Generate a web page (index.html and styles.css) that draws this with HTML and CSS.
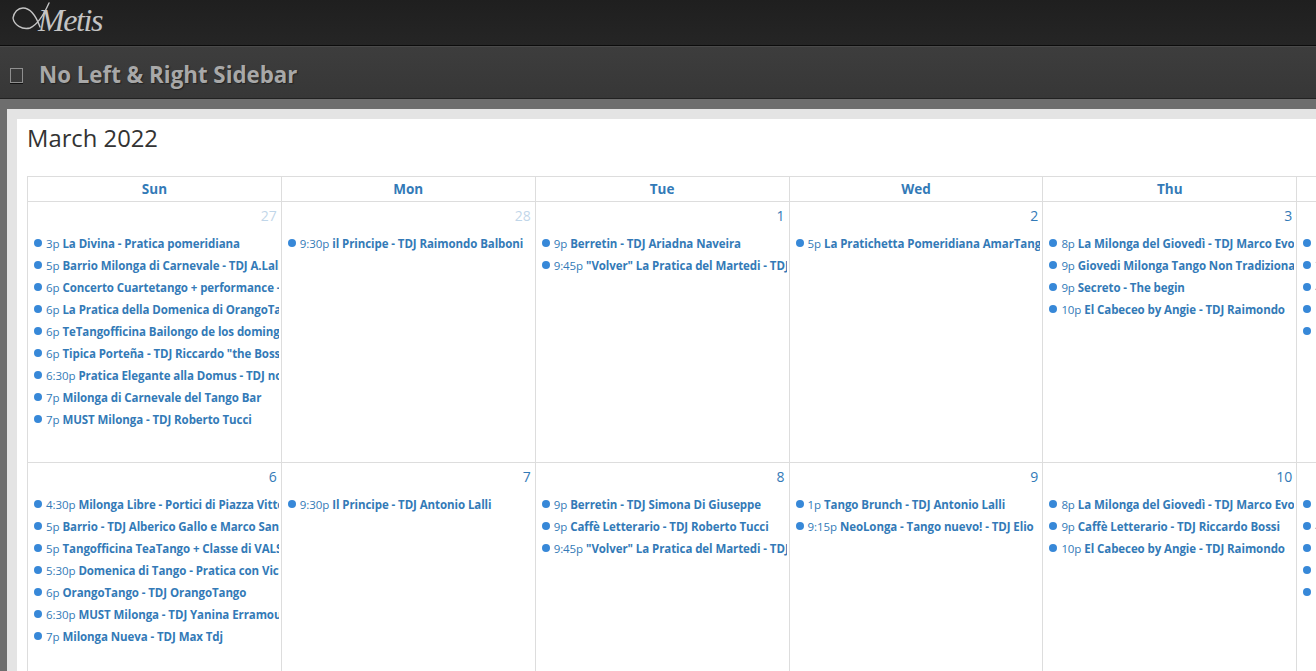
FILE: index.html
```html
<!DOCTYPE html>
<html lang="en">
<head>
<meta charset="utf-8">
<title>No Left &amp; Right Sidebar</title>
<link rel="stylesheet" href="styles.css">
</head>
<body>
<header class="topbar">
<svg class="flourish" width="40" height="34" viewBox="0 0 40 34" aria-hidden="true"><path d="M37 3C33 12 27 24 18 28C10 30 2 25 1 18C2 12 6 8 11 8C18 8 24 16 28 27" fill="none" stroke="#c4c4c4" stroke-width="1.4" stroke-linecap="round"/></svg>
<a class="logo">Metis</a>
</header>
<div class="headbar"><span class="headicon"></span><h1 class="headtitle">No Left &amp; Right Sidebar</h1></div>
<main class="outer">
<div class="inner">
<div class="panel">
<h2 class="month">March 2022</h2>
<div class="cal">
<div class="dow">Sun</div><div class="dow">Mon</div><div class="dow">Tue</div><div class="dow">Wed</div><div class="dow">Thu</div><div class="dow">Fri</div><div class="dow">Sat</div>

<div class="day"><div class="num other">27</div>
<div class="ev"><i></i><span>3p</span> <b>La Divina - Pratica pomeridiana</b></div>
<div class="ev"><i></i><span>5p</span> <b>Barrio Milonga di Carnevale - TDJ A.Lalli</b></div>
<div class="ev"><i></i><span>6p</span> <b>Concerto Cuartetango + performance - TDJ</b></div>
<div class="ev"><i></i><span>6p</span> <b>La Pratica della Domenica di OrangoTango</b></div>
<div class="ev"><i></i><span>6p</span> <b>TeTangofficina Bailongo de los domingos</b></div>
<div class="ev"><i></i><span>6p</span> <b>Tipica Porteña - TDJ Riccardo "the Boss"</b></div>
<div class="ev"><i></i><span>6:30p</span> <b>Pratica Elegante alla Domus - TDJ non</b></div>
<div class="ev"><i></i><span>7p</span> <b>Milonga di Carnevale del Tango Bar</b></div>
<div class="ev"><i></i><span>7p</span> <b>MUST Milonga - TDJ Roberto Tucci</b></div>
</div>
<div class="day"><div class="num other">28</div>
<div class="ev"><i></i><span>9:30p</span> <b>il Principe - TDJ Raimondo Balboni</b></div>
</div>
<div class="day"><div class="num">1</div>
<div class="ev"><i></i><span>9p</span> <b>Berretin - TDJ Ariadna Naveira</b></div>
<div class="ev"><i></i><span>9:45p</span> <b>"Volver" La Pratica del Martedi - TDJ Max</b></div>
</div>
<div class="day"><div class="num">2</div>
<div class="ev"><i></i><span>5p</span> <b>La Pratichetta Pomeridiana AmarTangO</b></div>
</div>
<div class="day"><div class="num">3</div>
<div class="ev"><i></i><span>8p</span> <b>La Milonga del Giovedì - TDJ Marco Evola</b></div>
<div class="ev"><i></i><span>9p</span> <b>Giovedi Milonga Tango Non Tradizionale</b></div>
<div class="ev"><i></i><span>9p</span> <b>Secreto - The begin</b></div>
<div class="ev"><i></i><span>10p</span> <b>El Cabeceo by Angie - TDJ Raimondo</b></div>
</div>
<div class="day"><div class="num">4</div>
<div class="ev"><i></i><span>10p</span> <b>Milonga</b></div>
<div class="ev"><i></i><span>7p</span> <b>Milonga</b></div>
<div class="ev"><i></i><span>4p</span> <b>Milonga</b></div>
<div class="ev"><i></i><span>10p</span> <b>Milonga</b></div>
<div class="ev"><i></i><span>10p</span> <b>Milonga</b></div>
</div>
<div class="day"><div class="num">5</div></div>

<div class="day"><div class="num">6</div>
<div class="ev"><i></i><span>4:30p</span> <b>Milonga Libre - Portici di Piazza Vittorio</b></div>
<div class="ev"><i></i><span>5p</span> <b>Barrio - TDJ Alberico Gallo e Marco Santoro</b></div>
<div class="ev"><i></i><span>5p</span> <b>Tangofficina TeaTango + Classe di VALS</b></div>
<div class="ev"><i></i><span>5:30p</span> <b>Domenica di Tango - Pratica con Victor</b></div>
<div class="ev"><i></i><span>6p</span> <b>OrangoTango - TDJ OrangoTango</b></div>
<div class="ev"><i></i><span>6:30p</span> <b>MUST Milonga - TDJ Yanina Erramouspe</b></div>
<div class="ev"><i></i><span>7p</span> <b>Milonga Nueva - TDJ Max Tdj</b></div>
</div>
<div class="day"><div class="num">7</div>
<div class="ev"><i></i><span>9:30p</span> <b>Il Principe - TDJ Antonio Lalli</b></div>
</div>
<div class="day"><div class="num">8</div>
<div class="ev"><i></i><span>9p</span> <b>Berretin - TDJ Simona Di Giuseppe</b></div>
<div class="ev"><i></i><span>9p</span> <b>Caffè Letterario - TDJ Roberto Tucci</b></div>
<div class="ev"><i></i><span>9:45p</span> <b>"Volver" La Pratica del Martedi - TDJ Max</b></div>
</div>
<div class="day"><div class="num">9</div>
<div class="ev"><i></i><span>1p</span> <b>Tango Brunch - TDJ Antonio Lalli</b></div>
<div class="ev"><i></i><span>9:15p</span> <b>NeoLonga - Tango nuevo! - TDJ Elio</b></div>
</div>
<div class="day"><div class="num">10</div>
<div class="ev"><i></i><span>8p</span> <b>La Milonga del Giovedì - TDJ Marco Evola</b></div>
<div class="ev"><i></i><span>9p</span> <b>Caffè Letterario - TDJ Riccardo Bossi</b></div>
<div class="ev"><i></i><span>10p</span> <b>El Cabeceo by Angie - TDJ Raimondo</b></div>
</div>
<div class="day"><div class="num">11</div>
<div class="ev"><i></i><span>10p</span> <b>Milonga</b></div>
<div class="ev"><i></i><span>4p</span> <b>Milonga</b></div>
<div class="ev"><i></i><span>10p</span> <b>Milonga</b></div>
<div class="ev"><i></i><span>10p</span> <b>Milonga</b></div>
<div class="ev"><i></i><span>10p</span> <b>Milonga</b></div>
</div>
<div class="day"><div class="num">12</div></div>
</div>
</div>
</div>
</main>
</body>
</html>
```
FILE: styles.css
```css
* { box-sizing: border-box; }
html, body { margin: 0; height: 671px; overflow: hidden; }
body { width: 1316px; font-family: "Open Sans", "Noto Sans", sans-serif; background: #6e6e6e; }
.topbar { height: 46px; background: linear-gradient(#1f1f1f, #252525); border-bottom: 1px solid #0c0c0c; padding-left: 12px; display: flex; align-items: flex-start; }
.flourish { flex: none; margin-right: -14px; }
.logo { display: block; font: italic 32px/44px "Liberation Serif", serif; color: #c4c4c4; letter-spacing: -1.4px; margin-top: -2px; }
.headbar { height: 53px; background: linear-gradient(#3d3d3d, #373737); border-top: 1px solid #4a4a4a; border-bottom: 1px solid #222; display: flex; align-items: center; padding: 5px 0 0 10px; }
.headicon { width: 13px; height: 15px; border: 1px solid #8f8f8f; box-shadow: 0 1px 0 #111; margin-right: 16px; }
.headtitle { margin: 0; font-size: 22.3px; line-height: 30px; font-weight: 700; color: #a8a8a8; text-shadow: 1px 1px 1px #222; }
.outer { padding: 10px 0 0 7px; }
.inner { background: #e4e4e4; padding: 10px 0 0 10px; }
.panel { background: #fff; padding: 0 0 0 10px; height: 560px; overflow: hidden; }
.month { margin: 0; height: 57px; font-size: 23.8px; line-height: 38px; font-weight: 400; color: #333; }
.cal { width: 1778px; display: grid; grid-template-columns: repeat(7, 253.85px); grid-template-rows: 25px 261px 261px; border-top: 1px solid #ddd; border-left: 1px solid #ddd; }
.dow { border-right: 1px solid #ddd; border-bottom: 1px solid #ddd; text-align: center; font-size: 13.5px; line-height: 24px; font-weight: 700; color: #337ab7; }
.day { border-right: 1px solid #ddd; border-bottom: 1px solid #ddd; overflow: hidden; min-width: 0; }
.num { height: 30px; padding: 4px 4px 0 0; text-align: right; font-size: 14px; line-height: 20px; color: #337ab7; }
.num.other { opacity: .3; }
.ev { display: flex; align-items: center; height: 22px; padding-left: 6px; margin-right: 2px; font-size: 11.5px; letter-spacing: -.08px; line-height: 21px; color: #337ab7; white-space: pre; overflow: hidden; }
.ev i { flex: none; width: 8px; height: 8px; border-radius: 50%; background: #3788d8; margin-right: 4px; }
.ev span { flex: none; margin-right: 3px; }
.ev b { font-weight: 700; }
```
